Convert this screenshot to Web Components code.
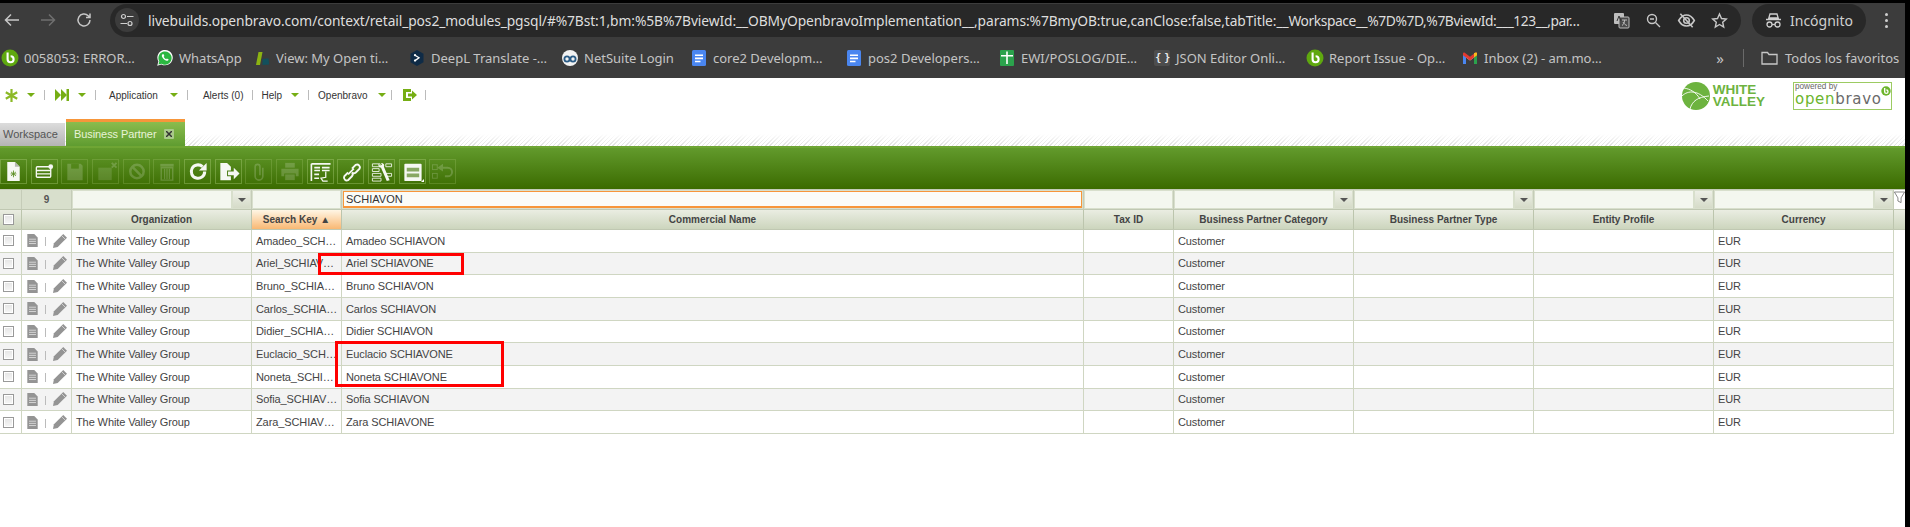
<!DOCTYPE html>
<html>
<head>
<meta charset="utf-8">
<title>Business Partner</title>
<style>
    html, body { margin: 0; height: 100%; overflow: hidden; }
    body {
        background: #000;
        padding: 3px 5px 0 0;
        box-sizing: border-box;
        font-family: "Liberation Sans", Arial, sans-serif;
    }
    #app { background: #fff; height: 100%; display: flex; flex-direction: column; overflow: hidden; }
</style>
</head>
<body>
<div id="app">
    <browser-bar></browser-bar>
    <bookmark-bar></bookmark-bar>
    <ob-nav></ob-nav>
    <ob-tabs></ob-tabs>
    <ob-toolbar></ob-toolbar>
    <ob-grid></ob-grid>
</div>
<script>
const favicons = {
    ob: `<svg width="18" height="18" viewBox="0 0 18 18"><circle cx="9" cy="9" r="8.5" fill="#5fa80f"/><path d="M6.6 3.5v6.7a3 3 0 1 0 3-3" fill="none" stroke="#fff" stroke-width="2.1"/></svg>`,
    whatsapp: `<svg width="18" height="18" viewBox="0 0 18 18"><path d="M1.2 16.8l1.2-4.3a7.7 7.7 0 1 1 3 2.9z" fill="#fff"/><path d="M2.4 15.6l.9-3.2a6.6 6.6 0 1 1 2.4 2.4z" fill="#2bb741"/><path d="M6.6 5.2c-.9.6-1 1.8-.3 3.1 1 1.7 2.5 3 4.2 3.4 1 .2 1.9-.3 2.2-1.2l-1.8-1.1-.8.8c-1-.4-1.9-1.3-2.4-2.4l.7-.8-1-1.9z" fill="#fff"/></svg>`,
    view: `<svg width="18" height="18" viewBox="0 0 18 18"><path d="M3 16l2.5-13h4L7 16z" fill="#8cb312"/><path d="M9.5 10l6-.8.7 6.3-6.7.5z" fill="#12505c"/></svg>`,
    deepl: `<svg width="18" height="18" viewBox="0 0 18 18"><path d="M9 1l6.5 3.7v8.6L9 17l-6.5-3.7V4.7z" fill="#0f2b46"/><path d="M7 6.2l4 2.6-4 2.8" fill="none" stroke="#fff" stroke-width="1.3"/><circle cx="7" cy="6.2" r="1.1" fill="#fff"/><circle cx="7" cy="11.6" r="1.1" fill="#fff"/></svg>`,
    netsuite: `<svg width="18" height="18" viewBox="0 0 18 18"><circle cx="9" cy="9" r="8" fill="#f2f2f2"/><circle cx="6" cy="10" r="2.6" fill="none" stroke="#2b5c86" stroke-width="1.8"/><circle cx="12" cy="10" r="2.6" fill="none" stroke="#2b5c86" stroke-width="1.8"/></svg>`,
    doc: `<svg width="18" height="18" viewBox="0 0 18 18"><rect x="2" y="1" width="14" height="16" rx="1.5" fill="#4a86f0"/><path d="M5 5.5h8v1.6H5zM5 8.6h8v1.6H5zM5 11.7h5.5v1.6H5z" fill="#fff"/></svg>`,
    sheet: `<svg width="18" height="18" viewBox="0 0 18 18"><rect x="2" y="1" width="14" height="16" rx="1" fill="#2ba24c"/><path d="M3 6h12v1.6H3zM8.2 2.5h1.6V15H8.2z" fill="#fff"/></svg>`,
    gmail: `<svg width="18" height="18" viewBox="0 0 18 18"><path d="M2 15V5l7 5 7-5v10h-3V8.5L9 11.5 5 8.5V15z" fill="#e8e8e8"/><path d="M2 5.5V15h3V7.6z" fill="#4a86f0"/><path d="M13 7.6V15h3V5.5z" fill="#2ba24c"/><path d="M2 4.5c0-1 1-1.2 1.8-.7L9 7.7l5.2-3.9c.8-.5 1.8-.3 1.8.7v1.8l-3 2.2-4 3-4-3-3-2.2z" fill="#e5392f"/><path d="M13 3.9l1.2-.1c.8-.5 1.8-.3 1.8.7v1.8l-3 2.2z" fill="#f6bb1c"/></svg>`
};

class BrowserBar extends HTMLElement {
    connectedCallback() {
        this.attachShadow({ mode: 'open' });
        this.shadowRoot.innerHTML = `
            <style>
                :host {
                    display: flex;
                    align-items: center;
                    height: 34px;
                    background: #3c3c3c;
                    color: #c8c8c8;
                    font-family: "Noto Sans", sans-serif;
                }
                .nav { display: flex; width: 110px; flex: none; padding-left: 2px; box-sizing: border-box; }
                .nav svg { width: 20px; height: 20px; margin-right: 6px; }
                .omnibox {
                    width: 1631px;
                    height: 33px;
                    flex: none;
                    display: flex;
                    align-items: center;
                    background: #282828;
                    border-radius: 17px;
                    box-sizing: border-box;
                    padding: 0 13px 0 5px;
                    font-size: 13.8px;
                    color: #dedede;
                }
                .tune {
                    width: 24px; height: 24px; flex: none; border-radius: 50%;
                    background: #3c3c3c; margin-right: 9px;
                    display: flex; align-items: center; justify-content: center;
                }
                .url { flex: 1; min-width: 0; white-space: nowrap; letter-spacing: -.1px; }
                .url span { letter-spacing: -.42px; }
                .actions { display: flex; gap: 15px; align-items: center; margin-left: 8px; flex: none; }
                .actions svg { width: 17px; height: 17px; display: block; }
                .incognito {
                    margin-left: 11px;
                    width: 114px; height: 33px; flex: none;
                    background: #282828; border-radius: 17px;
                    display: flex; align-items: center; justify-content: center; gap: 8px;
                    font-size: 14px; color: #cfcfcf;
                }
                .menu { margin-left: 19px; display: flex; flex-direction: column; gap: 3px; }
                .menu i { width: 3px; height: 3px; border-radius: 50%; background: #cfcfcf; }
            </style>
            <div class="nav">
                <svg viewBox="0 0 20 20" fill="none" stroke="#c7c7c7" stroke-width="1.5"><path d="M17 10H4M9 4.5L3.5 10 9 15.5"/></svg>
                <svg viewBox="0 0 20 20" fill="none" stroke="#6f6f6f" stroke-width="1.5" style="margin-left:10px"><path d="M3 10h13M11 4.5l5.500 5.500-5.500 5.500"/></svg>
                <svg viewBox="0 0 20 20" fill="none" stroke="#c7c7c7" stroke-width="1.5" style="margin-left:10px"><path d="M16 10a6 6 0 1 1-1.800-4.300L16 7.500M16 3.500v4h-4"/></svg>
            </div>
            <div class="omnibox">
                <div class="tune">
                    <svg width="16" height="16" viewBox="0 0 16 16" fill="none" stroke="#d0d0d0" stroke-width="1.200"><circle cx="4.500" cy="4.500" r="2"/><path d="M8 4.500h6.500M1.500 11.500H8"/><circle cx="11" cy="11.500" r="2"/></svg>
                </div>
                <div class="url">livebuilds.openbravo.com/context/retail_pos2_modules_pgsql/#%7Bst:1,bm:%5B%7BviewId:__OBMyOpenbravoImplementation__,params:%7BmyOB:true,canClose:false,tabTitle:__<span>Workspace__%7D%7D,%7BviewId:___123__,par…</span></div>
                <div class="actions">
                    <svg viewBox="0 0 17 17"><rect x="1" y="1" width="10" height="11" rx="1" fill="#bdbdbd"/><rect x="6" y="5" width="10" height="11" rx="1" fill="#4a4a4a" stroke="#bdbdbd"/><path d="M9 8h5M11.500 8c0 3-1 4.500-2.500 5.500M10 10c.8 1.800 2.500 3 4 3.500" stroke="#bdbdbd" fill="none"/><path d="M4 9l2-5 2 5" stroke="#333" fill="none"/></svg>
                    <svg viewBox="0 0 17 17" fill="none" stroke="#c7c7c7" stroke-width="1.400"><circle cx="7" cy="7" r="4.500"/><path d="M10.500 10.500L15 15M5 7h4"/></svg>
                    <svg viewBox="0 0 17 17" fill="none" stroke="#c7c7c7" stroke-width="1.400" style="width:19px;height:19px"><path d="M1.500 8.500C3.500 5 6 3.500 8.500 3.500s5 1.500 7 5c-2 3.500-4.500 5-7 5s-5-1.500-7-5z"/><circle cx="8.500" cy="8.500" r="2.500"/><path d="M3 2.500l11 12"/></svg>
                    <svg viewBox="0 0 17 17" fill="none" stroke="#c7c7c7" stroke-width="1.400"><path d="M8.500 2l2 4.500 4.800.5-3.600 3.200 1 4.800-4.200-2.500L4.300 15l1-4.800L1.700 7l4.800-.5z"/></svg>
                </div>
            </div>
            <div class="incognito">
                <svg width="17" height="17" viewBox="0 0 17 17" fill="none" stroke="#cfcfcf" stroke-width="1.300"><path d="M5 2h7l1.200 4H3.800zM1 7.500h15"/><circle cx="4.500" cy="12.500" r="2.500"/><circle cx="12.500" cy="12.500" r="2.500"/><path d="M7 12.500h3"/></svg>
                <span>Incógnito</span>
            </div>
            <div class="menu"><i></i><i></i><i></i></div>
        `;
    }
}

class BookmarkItem extends HTMLElement {
    connectedCallback() {
        this.attachShadow({ mode: 'open' });
        const icon = this.getAttribute('icon');
        const glyph = icon === 'json' ? '<span class="json">{ }</span>' : favicons[icon];
        this.shadowRoot.innerHTML = `
            <style>
                :host {
                    display: flex;
                    align-items: center;
                    width: ${this.getAttribute('size')}px;
                    flex: none;
                    gap: 5px;
                    white-space: nowrap;
                }
                svg { display: block; flex: none; }
                .json {
                    width: 16px; height: 16px; margin: 0 1px; flex: none; background: #4d4d4d; border-radius: 2px;
                    color: #eee; font: bold 10px "DejaVu Sans Mono", monospace; line-height: 16px; text-align: center;
                    letter-spacing: -1.500px; white-space: nowrap; overflow: hidden;
                }
            </style>
            ${glyph}<span><slot></slot></span>
        `;
    }
}

class BookmarkBar extends HTMLElement {
    connectedCallback() {
        this.attachShadow({ mode: 'open' });
        const items = [
            ['ob', 155, '0058053: ERROR…'],
            ['whatsapp', 97, 'WhatsApp'],
            ['view', 155, 'View: My Open ti…'],
            ['deepl', 153, 'DeepL Translate -…'],
            ['netsuite', 129, 'NetSuite Login'],
            ['doc', 155, 'core2 Developm…'],
            ['doc', 153, 'pos2 Developers…'],
            ['sheet', 155, 'EWI/POSLOG/DIE…'],
            ['json', 153, 'JSON Editor Onli…'],
            ['ob', 155, 'Report Issue - Op…'],
            ['gmail', 250, 'Inbox (2) - am.mo…']
        ];
        this.shadowRoot.innerHTML = `
            <style>
                :host {
                    display: flex;
                    align-items: center;
                    height: 41px;
                    flex: none;
                    background: #3c3c3c;
                    color: #c4c4c4;
                    font: 13px "Noto Sans", sans-serif;
                    padding-left: 1px;
                    box-sizing: border-box;
                }
                .more { width: 18px; font-size: 15px; text-align: center; }
                .sep { width: 1px; height: 18px; background: #6a6a6a; margin: 0 17px 0 14px; }
                .all { display: flex; align-items: center; gap: 7px; white-space: nowrap; }
            </style>
            ${items.map(i => `<bookmark-item icon="${i[0]}" size="${i[1]}">${i[2]}</bookmark-item>`).join('')}
            <span class="more">»</span>
            <span class="sep"></span>
            <span class="all">
                <svg width="17" height="14" viewBox="0 0 17 14" fill="none" stroke="#c7c7c7" stroke-width="1.300"><path d="M1 1.500h5.500l1.500 2h8v9.500H1z"/></svg>
                Todos los favoritos
            </span>
        `;
    }
}

class ObNav extends HTMLElement {
    connectedCallback() {
        this.attachShadow({ mode: 'open' });
        const sep = '<i class="sep"></i>';
        const caret = '<i class="caret"></i>';
        this.shadowRoot.innerHTML = `
            <style>
                :host {
                    display: flex;
                    height: 41px;
                    flex: none;
                    font: 10px "Liberation Sans", Arial, sans-serif;
                    color: #333;
                    position: relative;
                }
                .menu { display: flex; align-items: center; height: 34px; padding-left: 5px; }
                .sep { width: 1px; height: 10px; background: #bbb; flex: none; }
                .caret {
                    width: 0; height: 0; flex: none;
                    border-left: 4px solid transparent; border-right: 4px solid transparent;
                    border-top: 4px solid #76ae14;
                }
                svg { display: block; flex: none; }
                .logos { margin-left: auto; display: flex; align-items: flex-start; padding: 4px 13px 0 0; }
                .wv { display: flex; gap: 3px; align-items: center; }
                .wv b { font-size: 13.500px; line-height: 12.500px; color: #6db33f; }
                .pw {
                    margin-left: 28px; width: 99px; height: 28px; box-sizing: border-box;
                    border: 1px solid #9ccb62; position: relative; color: #666; overflow: hidden;
                }
                .pw small { position: absolute; left: 1px; top: 0; font-size: 8.200px; line-height: 8px; white-space: nowrap; }
                .pw span { position: absolute; left: 1px; top: 9px; font: 15px "DejaVu Sans", sans-serif; line-height: 15px; letter-spacing: .7px; color: #6a6a6a; white-space: nowrap; }
                .pw span em { font-style: normal; color: #6cb52d; }
                .pw svg { position: absolute; right: 0; top: 3px; }
            </style>
            <div class="menu">
                <svg width="13" height="13" viewBox="0 0 13 13" stroke="#8cb927" stroke-width="2.200"><path d="M6.500 0v13M.8 3.200l11.400 6.600M.8 9.800l11.400-6.600"/></svg>
                <span style="width:9px"></span>${caret}<span style="width:9px"></span>${sep}
                <span style="width:10px"></span>
                <svg width="14" height="12" viewBox="0 0 14 12" fill="#76ae14"><path d="M0 0l6 6-6 6zM6 0l6 6-6 6z"/><path d="M11.500 0H14v12h-2.500z"/></svg>
                <span style="width:9px"></span>${caret}<span style="width:9px"></span>${sep}
                <span style="width:13px"></span>Application<span style="width:12px"></span>${caret}<span style="width:9px"></span>${sep}
                <span style="width:15px"></span>Alerts (0)<span style="width:9px"></span>${sep}
                <span style="width:8px"></span>Help<span style="width:9px"></span>${caret}<span style="width:9px"></span>${sep}
                <span style="width:9px"></span>Openbravo<span style="width:10px"></span>${caret}<span style="width:5px"></span>${sep}
                <span style="width:11px"></span>
                <svg width="14" height="12" viewBox="0 0 14 12" fill="#76ae14"><path d="M0 0h8v3H3v6h5v3H0z"/><path d="M5 4.500h4V1.500L14 6l-5 4.500v-3H5z"/></svg>
                <span style="width:8px"></span>${sep}
            </div>
            <div class="logos">
                <div class="wv">
                    <svg width="28" height="28" viewBox="0 0 28 28"><circle cx="14" cy="14" r="14" fill="#6db33f"/><path d="M0 14c6-6 16-6 26 5M8 27c2-8 8-12 19-13M2 6c6 1 12 4 16 11" fill="none" stroke="#fff" stroke-width=".9"/></svg>
                    <b>WHITE<br>VALLEY</b>
                </div>
                <div class="pw">
                    <small>powered by</small>
                    <span><em>open</em>bravo</span>
                    <svg width="10" height="10" viewBox="0 0 18 18"><circle cx="9" cy="9" r="8.500" fill="#6cb52d"/><path d="M6.600 3.500v6.700a3 3 0 1 0 3-3" fill="none" stroke="#fff" stroke-width="2.500"/></svg>
                </div>
            </div>
        `;
    }
}

class ObTabs extends HTMLElement {
    connectedCallback() {
        this.attachShadow({ mode: 'open' });
        this.shadowRoot.innerHTML = `
            <style>
                :host {
                    display: flex;
                    align-items: flex-end;
                    height: 27px;
                    flex: none;
                    font: 11px "Liberation Sans", Arial, sans-serif;
                    background:
                        linear-gradient(#fff 25%, rgba(255,255,255,0) 100%) 0 11px / 100% 16px no-repeat,
                        repeating-linear-gradient(135deg, rgba(0,0,0,.12) 0 1px, transparent 1px 3px) 0 11px / 100% 16px no-repeat;
                }
                .ws {
                    width: 65px; height: 23px; margin-right: 1px; box-sizing: border-box;
                    padding-left: 3px; line-height: 23px; color: #555;
                    background: linear-gradient(#dcdcdc, #b4b4b4);
                }
                .bp {
                    width: 119px; height: 27px; box-sizing: border-box;
                    border-top: 3px solid #f7963a;
                    padding-left: 8px; line-height: 24px; color: #e8f3d8;
                    background: linear-gradient(#8bbc4e, #5f9c30);
                    display: flex; align-items: center; gap: 7px;
                }
                .bp span:first-child { width: 82px; flex: none; white-space: nowrap; letter-spacing: -.08px; }
                .x {
                    width: 10px; height: 10px; background: #a9c98a; border-radius: 1px; margin-left: 1px;
                    display: flex; align-items: center; justify-content: center;
                }
            </style>
            <div class="ws">Workspace</div>
            <div class="bp">
                <span>Business Partner</span>
                <span class="x"><svg width="6" height="6" viewBox="0 0 6 6" stroke="#333" stroke-width="1.500"><path d="M0 0l6 6M6 0L0 6"/></svg></span>
            </div>
        `;
    }
}

const toolIcons = {
    newdoc: `<path d="M6 2h8l5 5v15H6z" fill="#fff"/><path d="M14 2v5h5" fill="#bbb"/><path d="M12.500 11v7M9.500 14.500h6M10 12.500l5 4M15 12.500l-5 4" stroke="#5b8f22" stroke-width=".9"/>`,
    newrow: `<rect x="4" y="7" width="15" height="11" rx="1" fill="none" stroke="#fff" stroke-width="1.400"/><path d="M4 11h15M4 14.500h15" stroke="#fff" stroke-width="1.400"/><circle cx="19" cy="7" r="2.500" fill="#fff"/>`,
    save: `<path d="M5 4h14l2 2v15H5z" fill="#fff"/><path d="M9 4h8v5H9z" fill="#5b8f22"/>`,
    savex: `<rect x="5" y="8" width="14" height="13" fill="#fff" opacity=".7"/><path d="M19 3l5 5M24 3l-5 5" stroke="#fff" stroke-width="2"/>`,
    cancel: `<circle cx="13" cy="12" r="7" fill="none" stroke="#fff" stroke-width="2.600"/><path d="M8 7l10 10" stroke="#fff" stroke-width="2.600"/>`,
    trash: `<path d="M6 4h14v3H6z" fill="#fff"/><path d="M7 8h12v13H7z" fill="none" stroke="#fff" stroke-width="1.500"/><path d="M10.500 9v11M13 9v11M15.500 9v11" stroke="#fff" stroke-width="1.300"/>`,
    refresh: `<path d="M20 12a7 7 0 1 1-2.200-5" fill="none" stroke="#fff" stroke-width="3.200"/><path d="M22 3v8h-8z" fill="#fff"/>`,
    export: `<path d="M4 3h7l4 4v4h-4v6h4v4H4z" fill="#fff"/><path d="M12 12h6V8l6 6-6 6v-4h-6z" fill="#fff"/>`,
    clip: `<path d="M17 8v9a4 4 0 0 1-8 0V7a2.500 2.500 0 0 1 5 0v9" fill="none" stroke="#fff" stroke-width="1.700"/>`,
    print: `<path d="M8 3h10v5H8z" fill="#fff"/><path d="M4 9h18v8h-3v-3H7v3H4z" fill="#fff"/><path d="M8 15h10v6H8z" fill="#fff"/>`,
    sheet: `<path d="M3 4h20M3 4v18M6 8h6M14 8h8M6 11h6M14 11h8M6 15h5M6 19h5" stroke="#fff" stroke-width="1.700" fill="none"/><path d="M18 12v6l-5 1 2 3h5" stroke="#fff" stroke-width="1.300" fill="none"/>`,
    link: `<path d="M11 14l-4 4a3 3 0 0 0 4 4l4-4a3 3 0 0 0 0-4M15 10l4-4a3 3 0 0 1 4 4l-4 4a3 3 0 0 1-4 0" fill="none" stroke="#fff" stroke-width="2" transform="translate(-1 -1)"/><path d="M10 15l6-6" stroke="#fff" stroke-width="1.800"/>`,
    tools: `<path d="M3 4h8v3H3zM17 4h6v3h-6zM3 9h7v3H3zM3 14h9v3H3zM3 19h9v3H3zM17 14h6v3h-6z" fill="none" stroke="#fff" stroke-width=".9"/><path d="M12 3c3 0 4 2 3 4l6 14-3 1-6-14c-2 0-3-2-3-4l2 2 2-1z" fill="#fff"/>`,
    form: `<rect x="4" y="4" width="18" height="18" rx="1" fill="#fff"/><path d="M6.500 8h13v4h-13zM6.500 14h13v4h-13z" fill="#8cab68"/>`,
    undo: `<path d="M12 8h6a4 4 0 0 1 0 9h-3" fill="none" stroke="#fff" stroke-width="2"/><path d="M13 4l-6 4 6 4z" fill="#fff"/><rect x="2" y="5" width="5" height="5" fill="none" stroke="#fff"/><rect x="2" y="14" width="5" height="5" fill="none" stroke="#fff"/>`
};

class ObToolButton extends HTMLElement {
    connectedCallback() {
        this.attachShadow({ mode: 'open' });
        const off = this.hasAttribute('off');
        this.shadowRoot.innerHTML = `
            <style>
                :host {
                    display: flex;
                    align-items: center;
                    justify-content: center;
                    width: 27px;
                    height: 25px;
                    flex: none;
                    box-sizing: border-box;
                    border: 1px solid rgba(170, 205, 120, ${off ? '.25' : '.4'});
                    position: relative;
                }
                svg { opacity: ${off ? '.18' : '.95'}; display: block; }
                .corner {
                    position: absolute; right: 1px; bottom: 1px; width: 0; height: 0;
                    border-left: 3px solid transparent; border-bottom: 3px solid #fff;
                }
            </style>
            <svg width="25" height="23" viewBox="0 0 25 24">${toolIcons[this.getAttribute('icon')]}</svg>
            ${this.hasAttribute('corner') ? '<i class="corner"></i>' : ''}
        `;
    }
}

class ObToolbar extends HTMLElement {
    connectedCallback() {
        this.attachShadow({ mode: 'open' });
        const tools = ['newdoc', 'newrow', 'save:off', 'savex:off', 'cancel:off', 'trash:off', 'refresh', 'export',
            'clip:off', 'print:off', 'sheet', 'link', 'tools', 'form:corner', 'undo:off'];
        this.shadowRoot.innerHTML = `
            <style>
                :host {
                    display: flex;
                    align-items: center;
                    gap: 3.670px;
                    height: 43px;
                    flex: none;
                    box-sizing: border-box;
                    padding: 8px 0 0 0;
                    overflow: hidden;
                    background: linear-gradient(#6fa534 0 2px, #629a2c 2px, #3b6b00 100%);
                }
                ob-tool-button:first-child { margin-left: -4px; }
            </style>
            ${tools.map(t => {
                const [icon, flag] = t.split(':');
                return `<ob-tool-button icon="${icon}" ${flag || ''}></ob-tool-button>`;
            }).join('')}
        `;
    }
}

class ObGrid extends HTMLElement {
    connectedCallback() {
        this.attachShadow({ mode: 'open' });
        const rows = [
            ['Amadeo_SCH…', 'Amadeo SCHIAVON'],
            ['Ariel_SCHIAV…', 'Ariel SCHIAVONE'],
            ['Bruno_SCHIA…', 'Bruno SCHIAVON'],
            ['Carlos_SCHIA…', 'Carlos SCHIAVON'],
            ['Didier_SCHIA…', 'Didier SCHIAVON'],
            ['Euclacio_SCH…', 'Euclacio SCHIAVONE'],
            ['Noneta_SCHI…', 'Noneta SCHIAVONE'],
            ['Sofia_SCHIAV…', 'Sofia SCHIAVON'],
            ['Zara_SCHIAV…', 'Zara SCHIAVONE']
        ];
        const check = '<i class="check"></i>';
        const drop = '<i class="drop"></i>';
        const rowIcons = `
            <svg width="11" height="13" viewBox="0 0 12 15"><path d="M0 0h8l4 4v11H0z" fill="#949494"/><path d="M2 6h8M2 8.500h8M2 11h8" stroke="#e6e6e6" stroke-width=".9"/></svg>
            <i class="tick"></i>
            <svg width="14" height="14" viewBox="0 0 15 15"><path d="M11 0l4 4L5 14l-5 1 1-5z" fill="#949494"/><path d="M9.500 2l3.500 3.500" stroke="#fff" stroke-width=".6"/></svg>`;
        this.shadowRoot.innerHTML = `
            <style>
                :host {
                    display: block;
                    position: relative;
                    --cols: 22px 50px 180px 90px 742px 90px 180px 180px 180px 180px 11px;
                    --line: #cfd6c2;
                    font: 11px "Liberation Sans", Arial, sans-serif;
                    color: #444;
                }
                .row { display: grid; grid-template-columns: var(--cols); }
                .cell {
                    box-sizing: border-box;
                    border-right: 1px solid var(--line);
                    overflow: hidden;
                    white-space: nowrap;
                    min-width: 0;
                    display: flex;
                    align-items: center;
                }
                .filter { height: 21px; background: #d8dfcc; border-top: 1px solid #c5ccb8; border-bottom: 1px solid #c0c8b2; box-sizing: border-box; }
                .filter .cell { border-right: 1px solid #c5ccb8; padding: 1px; }
                .count { justify-content: center; font: bold 10px "Liberation Sans", Arial, sans-serif; color: #555; }
                .field { flex: 1; height: 100%; min-width: 0; background: #f4f7ef; box-sizing: border-box; padding-left: 2px; display: flex; align-items: center; }
                .field.on { border: 1px solid #f7963a; border-bottom-width: 2px; background: #fbfcf8; color: #333; }
                .drop {
                    width: 17px; height: 100%; flex: none; margin-left: 2px;
                    background: linear-gradient(#edefe6, #d5dbc8);
                    display: flex; align-items: center; justify-content: center;
                }
                .drop::after {
                    content: ""; border-left: 4px solid transparent; border-right: 4px solid transparent;
                    border-top: 4px solid #555;
                }
                .funnel { background: #fff; padding: 0 !important; align-items: flex-start; border-right: 0 !important; }
                .head { height: 20px; background: linear-gradient(#eaede2, #ccd5bd); border-bottom: 1px solid #c0c8b2; box-sizing: border-box; }
                .head .cell { justify-content: center; font: bold 10px "Liberation Sans", Arial, sans-serif; border-right-color: #bcc5ad; color: #444; }
                .head .sorted { background: linear-gradient(#fff6e5, #f9b873); }
                .head .sorted span { font-size: 10px; margin-left: 3px; line-height: 10px; }
                .data { height: 22.670px; box-sizing: border-box; border-bottom: 1px solid var(--line); width: 1894px; grid-template-columns: 22px 50px 180px 90px 742px 90px 180px 180px 180px 180px; background: #fff; }
                .data.alt { background: #f3f3f3; }
                .data .txt { padding-left: 4px; letter-spacing: -.1px; }
                .check {
                    width: 11px; height: 11px; box-sizing: border-box; margin-left: 3px; display: block; flex: none;
                    border: 1px solid #999; box-shadow: inset 0 0 0 1px #fff; background: linear-gradient(#e4e4e4, #f7f7f7);
                }
                .acts { padding-left: 5px; gap: 7px; }
                .tick { width: 1px; height: 9px; background: #bbb; display: block; margin-top: 2px; flex: none; }
                .acts svg { display: block; flex: none; }
                .mark { position: absolute; border: 3px solid #f00; box-sizing: border-box; pointer-events: none; }
            </style>
            <div class="row filter">
                <div class="cell"></div>
                <div class="cell count">9</div>
                <div class="cell"><div class="field"></div>${drop}</div>
                <div class="cell"><div class="field"></div></div>
                <div class="cell"><div class="field on">SCHIAVON</div></div>
                <div class="cell"><div class="field"></div></div>
                <div class="cell"><div class="field"></div>${drop}</div>
                <div class="cell"><div class="field"></div>${drop}</div>
                <div class="cell"><div class="field"></div>${drop}</div>
                <div class="cell"><div class="field"></div>${drop}</div>
                <div class="cell funnel"><svg width="11" height="15" viewBox="0 0 14 15"><path d="M.5.500h13L9 8v6L5 12V8z" fill="#fff" stroke="#666"/></svg></div>
            </div>
            <div class="row head">
                <div class="cell" style="justify-content:flex-start">${check}</div>
                <div class="cell"></div>
                <div class="cell">Organization</div>
                <div class="cell sorted">Search Key<span>▲</span></div>
                <div class="cell">Commercial Name</div>
                <div class="cell">Tax ID</div>
                <div class="cell">Business Partner Category</div>
                <div class="cell">Business Partner Type</div>
                <div class="cell">Entity Profile</div>
                <div class="cell">Currency</div>
                <div class="cell" style="border:0"></div>
            </div>
            ${rows.map((r, i) => `
            <div class="row data ${i % 2 ? 'alt' : ''}">
                <div class="cell">${check}</div>
                <div class="cell acts">${rowIcons}</div>
                <div class="cell txt">The White Valley Group</div>
                <div class="cell txt">${r[0]}</div>
                <div class="cell txt">${r[1]}</div>
                <div class="cell txt"></div>
                <div class="cell txt">Customer</div>
                <div class="cell txt"></div>
                <div class="cell txt"></div>
                <div class="cell txt">EUR</div>
            </div>`).join('')}
            <div class="mark" style="left:318px;top:64px;width:146px;height:22px"></div>
            <div class="mark" style="left:335px;top:152px;width:169px;height:46px"></div>
        `;
    }
}

customElements.define('bookmark-item', BookmarkItem);
customElements.define('browser-bar', BrowserBar);
customElements.define('bookmark-bar', BookmarkBar);
customElements.define('ob-nav', ObNav);
customElements.define('ob-tabs', ObTabs);
customElements.define('ob-tool-button', ObToolButton);
customElements.define('ob-toolbar', ObToolbar);
customElements.define('ob-grid', ObGrid);
</script>
</body>
</html>
